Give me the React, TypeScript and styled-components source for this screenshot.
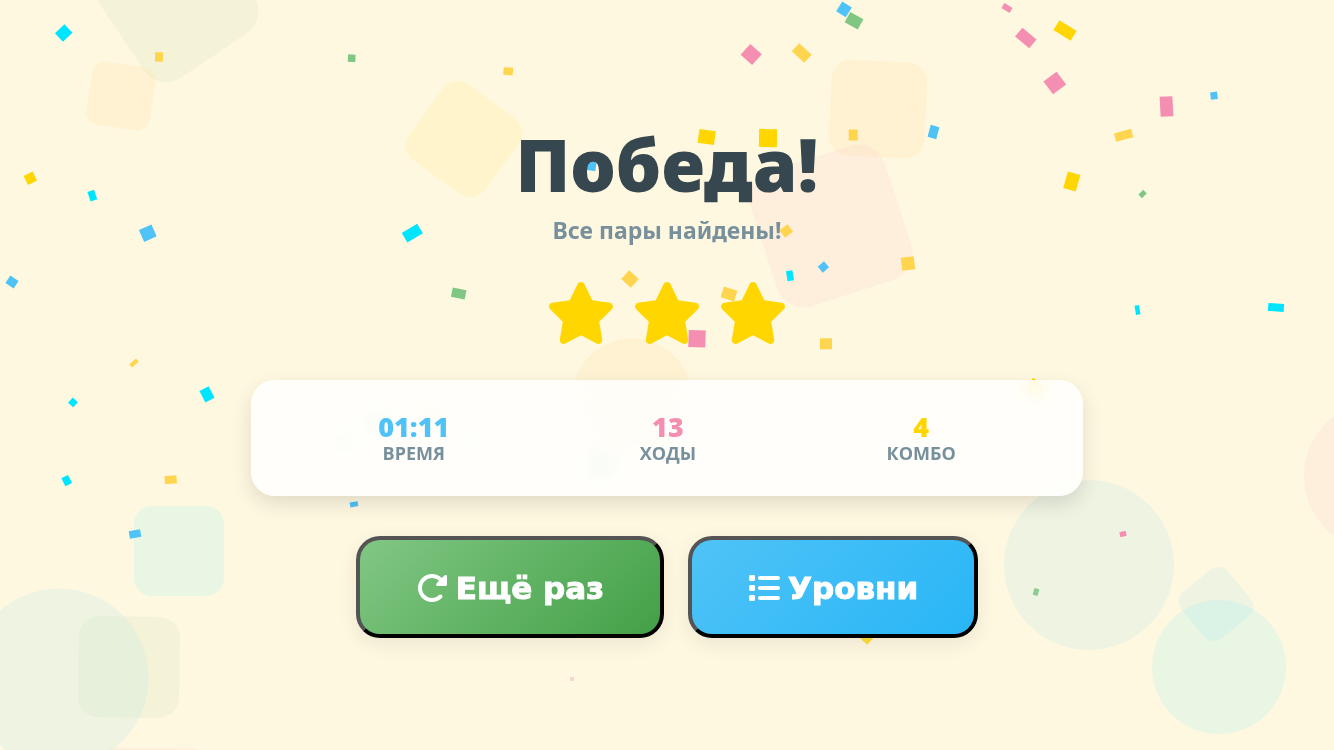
import React from "react";
import styled, { createGlobalStyle } from "styled-components";
import { FaList, FaRotateRight, FaStar } from "react-icons/fa6";

const palette = {
  gold: "#ffd600",
  amber: "#ffd54f",
  orange: "#ffc046",
  pink: "#f48fb1",
  blue: "#4fc3f7",
  cyan: "#00e5ff",
  green: "#81c784",
  ink: "#37474f",
  muted: "#78909c",
};

type Tone = "gold" | "amber" | "orange" | "pink" | "blue" | "cyan" | "green";

const GlobalStyle = createGlobalStyle`
  *, *::before, *::after { box-sizing: border-box; }
  body {
    margin: 0;
    background: #fff8e1;
    font-family: "Noto Sans", "Open Sans", sans-serif;
  }
`;

const Page = styled.main`
  min-height: 100vh;
  display: flex;
  flex-direction: column;
  align-items: center;
  justify-content: center;
  padding: 24px;
  overflow: hidden;
`;

const Backdrop = styled.svg`
  position: fixed;
  inset: 0;
  width: 100%;
  height: 100%;
  z-index: -1;
`;

const Title = styled.h1`
  margin: 0;
  font-size: 72px;
  font-weight: 900;
  line-height: 104px;
  color: ${palette.ink};
`;

const Subtitle = styled.p`
  margin: 0 0 38px;
  font-size: 23px;
  font-weight: 700;
  line-height: 28px;
  color: ${palette.muted};
`;

const Stars = styled.div`
  display: flex;
  gap: 16px;
  margin-bottom: 36px;
  color: ${palette.gold};

  svg {
    display: block;
    width: 70px;
    height: 62px;
  }
`;

const StatsCard = styled.dl`
  display: flex;
  justify-content: space-around;
  width: 100%;
  max-width: 832px;
  margin: 0 0 40px;
  padding: 32px;
  border-radius: 24px;
  background: rgba(255, 255, 255, 0.85);
  backdrop-filter: blur(10px);
  box-shadow: 0 8px 20px rgba(0, 0, 0, 0.12);
`;

const Stat = styled.div`
  display: flex;
  flex-direction: column-reverse;
  align-items: center;
`;

const StatValue = styled.dd<{ $tone: Tone }>`
  margin: 0;
  font-family: "Open Sans", sans-serif;
  font-size: 27px;
  font-weight: 800;
  line-height: 30px;
  color: ${({ $tone }) => palette[$tone]};
`;

const StatLabel = styled.dt`
  font-family: "Open Sans", sans-serif;
  font-size: 18px;
  font-weight: 700;
  line-height: 22px;
  text-transform: uppercase;
  color: ${palette.muted};
`;

const Actions = styled.div`
  display: flex;
  flex-wrap: wrap;
  justify-content: center;
  gap: 24px;
`;

const ActionButton = styled.button<{ $from: string; $to: string }>`
  display: flex;
  align-items: center;
  gap: 8px;
  padding: 25px 56px 23px;
  border: 4px outset #000;
  border-radius: 24px;
  background: linear-gradient(135deg, ${({ $from }) => $from}, ${({ $to }) => $to});
  box-shadow: 0 6px 20px rgba(0, 0, 0, 0.08);
  font-family: "DejaVu Sans", sans-serif;
  font-size: 31px;
  font-weight: 700;
  line-height: 46px;
  -webkit-text-stroke: 1px #fff;
  color: #fff;
  cursor: pointer;

  svg {
    width: 32px;
    height: 32px;
    stroke: none;
  }
`;

/* x, y are centres; size is the side of a square or the diameter of a circle */
type Shape = { kind: "circle" | "square"; x: number; y: number; size: number; turn?: number; tone: Tone };

const shapes: Shape[] = [
  { kind: "square", x: 177, y: 1, size: 132, turn: -34, tone: "green" },
  { kind: "square", x: 121, y: 96, size: 64, turn: 9, tone: "orange" },
  { kind: "square", x: 464, y: 139, size: 94, turn: 36, tone: "gold" },
  { kind: "square", x: 878, y: 109, size: 96, turn: 3, tone: "orange" },
  { kind: "square", x: 831, y: 226, size: 141, turn: -18, tone: "pink" },
  { kind: "circle", x: 632, y: 399, size: 121, tone: "orange" },
  { kind: "square", x: 179, y: 551, size: 90, tone: "cyan" },
  { kind: "circle", x: 59, y: 678, size: 179, tone: "blue" },
  { kind: "square", x: 129, y: 667, size: 101, turn: 1, tone: "green" },
  { kind: "square", x: 154, y: 808, size: 120, turn: 1, tone: "pink" },
  { kind: "circle", x: 1089, y: 565, size: 170, tone: "blue" },
  { kind: "circle", x: 1379, y: 476, size: 150, tone: "pink" },
  { kind: "square", x: 1216, y: 604, size: 60, turn: -39, tone: "blue" },
  { kind: "circle", x: 1219, y: 667, size: 134, tone: "cyan" },
];

/* [centre x, centre y, width, height, turn, tone, opacity] */
type Piece = [number, number, number, number, number, Tone, number?];

const confetti: Piece[] = [
  [63.7, 33, 13, 11.7, -43, "cyan"],
  [159, 57, 8, 9.5, 0, "amber"],
  [30.3, 178.3, 10, 10, -26, "gold"],
  [92.3, 195.7, 7, 10, -19, "cyan"],
  [147.8, 233.2, 13.7, 13, -24, "blue"],
  [351.7, 58.3, 7.5, 7.5, 3, "green"],
  [508.2, 71.3, 9.5, 7.7, 4, "amber"],
  [412.3, 233.2, 18, 11, -31, "cyan"],
  [591, 166, 10, 9, 8, "blue"],
  [706.7, 137, 16.5, 14, 8, "gold"],
  [768, 138, 18, 18, 1, "gold"],
  [786.3, 231, 10, 9.3, -37, "amber"],
  [630, 279, 13, 12, 42, "amber"],
  [729, 294, 14, 11.3, 17, "amber"],
  [823.4, 267, 8.3, 7.7, -41, "blue"],
  [790, 275.7, 6.5, 10, -9, "cyan"],
  [697, 338.7, 17, 17, 2, "pink"],
  [826, 343.8, 12, 11, 0, "amber"],
  [458.7, 293.5, 14, 9.5, 11, "green"],
  [751.2, 54.5, 15.5, 14.5, 42, "pink"],
  [844, 9.3, 11.3, 11.5, 32, "blue"],
  [854, 20.7, 15, 11.7, 29, "green"],
  [801.7, 53, 17, 11, 43, "amber"],
  [1007, 8, 9.5, 5.8, 31, "pink"],
  [1025.8, 38, 18.5, 11.5, 40, "pink"],
  [1065, 30.5, 20.3, 11.5, 32, "gold"],
  [1054.8, 83, 16.5, 16, -37, "pink"],
  [1166.5, 106.5, 12.8, 20, -3, "pink"],
  [1214, 95.7, 7, 7.5, -7, "blue"],
  [933.5, 132, 9, 12.5, 15, "blue"],
  [1123.6, 135.3, 17.8, 8.7, -15, "amber"],
  [1071.8, 181.5, 13, 17, 16, "gold"],
  [1142.6, 194, 6.7, 5, -44, "green"],
  [853.2, 135, 9, 11, 0, "amber"],
  [908, 263.5, 13, 13, -7, "amber"],
  [1137.5, 310, 4.5, 9.5, -9, "cyan"],
  [1276, 307.5, 15.8, 8, 4, "cyan"],
  [12, 282, 9.8, 9, 33, "blue"],
  [134, 363, 9, 4.3, -42, "amber"],
  [73, 402.4, 7, 7, 42, "cyan"],
  [207, 394.4, 10.3, 13, -27, "cyan"],
  [66.7, 480.6, 7.5, 9, -27, "cyan"],
  [170.7, 479.7, 12, 8, -5, "amber"],
  [135, 534, 11.5, 7.5, -10, "blue"],
  [354, 504.3, 8, 5, -10, "blue"],
  [1123, 534, 6.5, 5, -14, "pink"],
  [1036, 592, 5, 7, 15, "green", 0.9],
  [867.3, 638, 9, 10, 42, "gold", 0.75],
  [572, 679, 4, 4, 0, "pink", 0.35],
  [1035, 389, 16, 16, 35, "gold"],
  [344, 443, 9, 10, 20, "green"],
  [378, 422, 13, 12, 10, "green"],
  [430, 416, 13, 12, 30, "amber"],
  [475, 440, 8, 7, 15, "blue", 0.6],
  [337, 489, 8, 7, 20, "amber", 0.6],
  [601, 465, 16, 14, 25, "green"],
];

const stats: { label: string; value: string; tone: Tone }[] = [
  { label: "Время", value: "01:11", tone: "blue" },
  { label: "Ходы", value: "13", tone: "pink" },
  { label: "Комбо", value: "4", tone: "gold" },
];

function Celebration() {
  return (
    <Backdrop viewBox="0 0 1334 750" preserveAspectRatio="xMidYMid slice" aria-hidden="true">
      {shapes.map(({ kind, x, y, size, turn = 0, tone }, i) => (
        <rect
          key={i}
          x={x - size / 2}
          y={y - size / 2}
          width={size}
          height={size}
          rx={kind === "circle" ? size / 2 : size / 5}
          transform={`rotate(${turn} ${x} ${y})`}
          fill={palette[tone]}
          opacity={0.09}
        />
      ))}
      {confetti.map(([x, y, w, h, turn, tone, opacity = 1], i) => (
        <rect
          key={i}
          x={x - w / 2}
          y={y - h / 2}
          width={w}
          height={h}
          transform={`rotate(${turn} ${x} ${y})`}
          fill={palette[tone]}
          opacity={opacity}
        />
      ))}
    </Backdrop>
  );
}

export default function App() {
  return (
    <>
      <GlobalStyle />
      <Celebration />
      <Page>
        <Title>Победа!</Title>
        <Subtitle>Все пары найдены!</Subtitle>
        <Stars role="img" aria-label="3 / 3">
          <FaStar />
          <FaStar />
          <FaStar />
        </Stars>
        <StatsCard>
          {stats.map(({ label, value, tone }) => (
            <Stat key={label}>
              <StatLabel>{label}</StatLabel>
              <StatValue $tone={tone}>{value}</StatValue>
            </Stat>
          ))}
        </StatsCard>
        <Actions>
          <ActionButton type="button" $from="#81c784" $to="#43a047">
            <FaRotateRight aria-hidden="true" />
            Ещё раз
          </ActionButton>
          <ActionButton type="button" $from="#4fc3f7" $to="#29b6f6">
            <FaList aria-hidden="true" />
            Уровни
          </ActionButton>
        </Actions>
      </Page>
    </>
  );
}
